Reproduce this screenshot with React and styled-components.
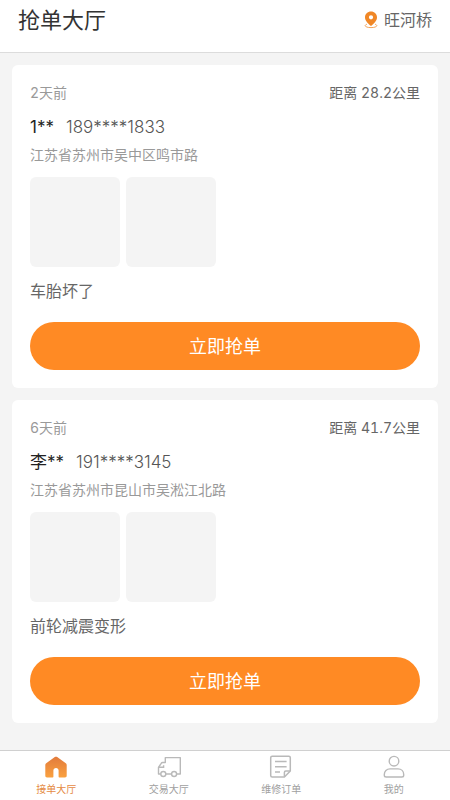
import styled, { createGlobalStyle } from 'styled-components';

const orders = [
  {
    id: 1,
    time: '2天前',
    distance: '28.2',
    name: '1**',
    phone: '189****1833',
    address: '江苏省苏州市吴中区鸣市路',
    desc: '车胎坏了',
  },
  {
    id: 2,
    time: '6天前',
    distance: '41.7',
    name: '李**',
    phone: '191****3145',
    address: '江苏省苏州市昆山市吴淞江北路',
    desc: '前轮减震变形',
  },
];

const tabs = [
  { label: '接单大厅', Icon: HomeIcon, active: true },
  { label: '交易大厅', Icon: TruckIcon },
  { label: '维修订单', Icon: OrderIcon },
  { label: '我的', Icon: UserIcon },
];

export default function App() {
  return (
    <>
      <GlobalStyle />
      <Header>
        <Title>抢单大厅</Title>
        <Location type="button">
          <PinIcon />
          旺河桥
        </Location>
      </Header>
      <OrderList>
        {orders.map((order) => (
          <OrderCard key={order.id} order={order} />
        ))}
      </OrderList>
      <TabBar>
        {tabs.map(({ label, Icon, active }) => (
          <Tab key={label} href="#" $active={active}>
            <Icon />
            {label}
          </Tab>
        ))}
      </TabBar>
    </>
  );
}

function OrderCard({ order }) {
  return (
    <Card>
      <CardTop>
        <Time>{order.time}</Time>
        <Distance>距离 {order.distance}公里</Distance>
      </CardTop>
      <Contact>
        <Name>{order.name}</Name>
        <Phone>{order.phone}</Phone>
      </Contact>
      <Address>{order.address}</Address>
      <Photos>
        <Photo />
        <Photo />
      </Photos>
      <Desc>{order.desc}</Desc>
      <GrabButton type="button">立即抢单</GrabButton>
    </Card>
  );
}

function PinIcon() {
  return (
    <svg width="14" height="18" viewBox="0 0 14 18" fill="none" aria-hidden="true">
      <path d="M3 13.2C1.8 13.6 1.2 14.1 1.2 14.7C1.2 15.8 3.8 16.6 7 16.6S12.8 15.8 12.8 14.7C12.8 14.1 12.2 13.6 11 13.2" stroke="#f3a55c" strokeWidth="1" />
      <path
        fillRule="evenodd"
        d="M7 0.6C3.6 0.6 1 3.1 1 6.4C1 9.8 4.4 12.6 7 15C9.6 12.6 13 9.8 13 6.4C13 3.1 10.4 0.6 7 0.6ZM7 4.2A2.1 2.1 0 1 1 7 8.4A2.1 2.1 0 0 1 7 4.2Z"
        fill="#f08726"
      />
    </svg>
  );
}

function HomeIcon() {
  return (
    <svg width="24" height="24" viewBox="0 0 24 24" aria-hidden="true">
      <defs>
        <linearGradient id="home" x1="0" y1="0" x2="0" y2="1">
          <stop offset="0" stopColor="#e27b3c" />
          <stop offset="1" stopColor="#faa13f" />
        </linearGradient>
      </defs>
      <path
        d="M10.8 2C11.5 1.5 12.5 1.5 13.2 2L21.8 8.2C22.4 8.7 22.7 9.3 22.7 10V20.8C22.7 21.9 22 22.5 21 22.5H15.3C14.9 22.5 14.6 22.2 14.6 21.8V15.6C14.6 14 13.5 13 12 13S9.4 14 9.4 15.6V21.8C9.4 22.2 9.1 22.5 8.7 22.5H3C2 22.5 1.3 21.9 1.3 20.8V10C1.3 9.3 1.6 8.7 2.2 8.2Z"
        fill="url(#home)"
      />
    </svg>
  );
}

function TruckIcon() {
  return (
    <svg width="24" height="24" viewBox="0 0 24 24" fill="none" stroke="#b9b9b9" strokeWidth="1.4" aria-hidden="true">
      <path d="M3.8 19H1.5V12.5L4.2 8.3C4.5 7.8 5 7.5 5.6 7.5H8.3V2.6H23.3V19H19.6" strokeLinejoin="round" />
      <path d="M8.8 19H14.6M1.7 12.3H6.6V10.2" />
      <circle cx="6.3" cy="19" r="2.5" />
      <circle cx="17.1" cy="19" r="2.5" />
    </svg>
  );
}

function OrderIcon() {
  return (
    <svg width="24" height="24" viewBox="0 0 24 24" fill="none" stroke="#b9b9b9" strokeWidth="1.5" aria-hidden="true">
      <path d="M3.2 1.3H19.8C20.7 1.3 21.3 1.9 21.3 2.8V16L15.4 22.1H3.2C2.3 22.1 1.7 21.5 1.7 20.6V2.8C1.7 1.9 2.3 1.3 3.2 1.3Z" strokeLinejoin="round" />
      <path d="M15.4 21.8V17.5C15.4 16.6 15.9 16.1 16.8 16.1H21.1M6 6.5H17.6M6 11.7H17.6M6 16.9H11" />
    </svg>
  );
}

function UserIcon() {
  return (
    <svg width="24" height="24" viewBox="0 0 24 24" fill="none" stroke="#b9b9b9" strokeWidth="1.4" aria-hidden="true">
      <circle cx="12" cy="6.2" r="4.8" />
      <path d="M2.3 20.2V19.6C2.3 16.2 4.7 13.9 8 13.9H16C19.3 13.9 21.7 16.2 21.7 19.6V20.2C21.7 21.3 21 22 19.9 22H4.1C3 22 2.3 21.3 2.3 20.2Z" />
    </svg>
  );
}

const GlobalStyle = createGlobalStyle`
  * {
    box-sizing: border-box;
  }

  body {
    margin: 0;
    background: #f4f4f4;
    color: #333;
    font-family: Inter, 'Noto Sans CJK SC', sans-serif;
  }

  p,
  h1 {
    margin: 0;
    font-weight: 400;
  }

  button {
    border: none;
    font-family: inherit;
    cursor: pointer;
  }
`;

const Header = styled.header`
  display: flex;
  justify-content: space-between;
  align-items: flex-start;
  padding: 4px 18px 16px;
  border-bottom: 1px solid #dcdcdc;
  background: #fff;
`;

const Title = styled.h1`
  font-size: 22px;
  line-height: 32px;
`;

const Location = styled.button`
  display: flex;
  align-items: center;
  gap: 6px;
  padding: 0;
  background: none;
  color: #666;
  font-size: 16px;
  line-height: 32px;
`;

const OrderList = styled.main`
  display: flex;
  flex-direction: column;
  gap: 12px;
  padding: 12px 12px 62px;
`;

const Card = styled.article`
  padding: 18px;
  border-radius: 6px;
  background: #fff;
`;

const CardTop = styled.div`
  display: flex;
  justify-content: space-between;
  font-size: 14px;
  font-variant-numeric: tabular-nums;
  line-height: 20px;
`;

const Time = styled.p`
  color: #999;
`;

const Distance = styled.p`
  color: #666;
`;

const Contact = styled.div`
  display: flex;
  gap: 12px;
  margin-top: 12px;
  font-size: 17px;
  line-height: 24px;
`;

const Name = styled.p`
  color: #222;
`;

const Phone = styled.p`
  color: #555;
  font-weight: 300;
`;

const Address = styled.p`
  margin-top: 6px;
  color: #999;
  font-size: 14px;
  line-height: 20px;
`;

const Photos = styled.div`
  display: flex;
  gap: 6px;
  margin-top: 12px;
`;

const Photo = styled.div`
  width: 90px;
  height: 90px;
  border-radius: 6px;
  background: #f4f4f4;
`;

const Desc = styled.p`
  margin-top: 12px;
  color: #666;
  font-size: 16px;
  line-height: 24px;
`;

const GrabButton = styled.button`
  width: 100%;
  height: 48px;
  margin-top: 19px;
  padding: 0 0 2px;
  border-radius: 24px;
  background: #ff8a24;
  color: #fff;
  font-size: 18px;
`;

const TabBar = styled.nav`
  position: fixed;
  right: 0;
  bottom: 0;
  left: 0;
  display: flex;
  padding: 4px 0;
  border-top: 1px solid #d0d0d0;
  background: #fff;
`;

const Tab = styled.a`
  display: flex;
  flex: 1;
  flex-direction: column;
  align-items: center;
  gap: 3px;
  color: ${({ $active }) => ($active ? '#e58a42' : '#a0a0a0')};
  font-size: 10px;
  line-height: 14px;
  text-decoration: none;
`;
